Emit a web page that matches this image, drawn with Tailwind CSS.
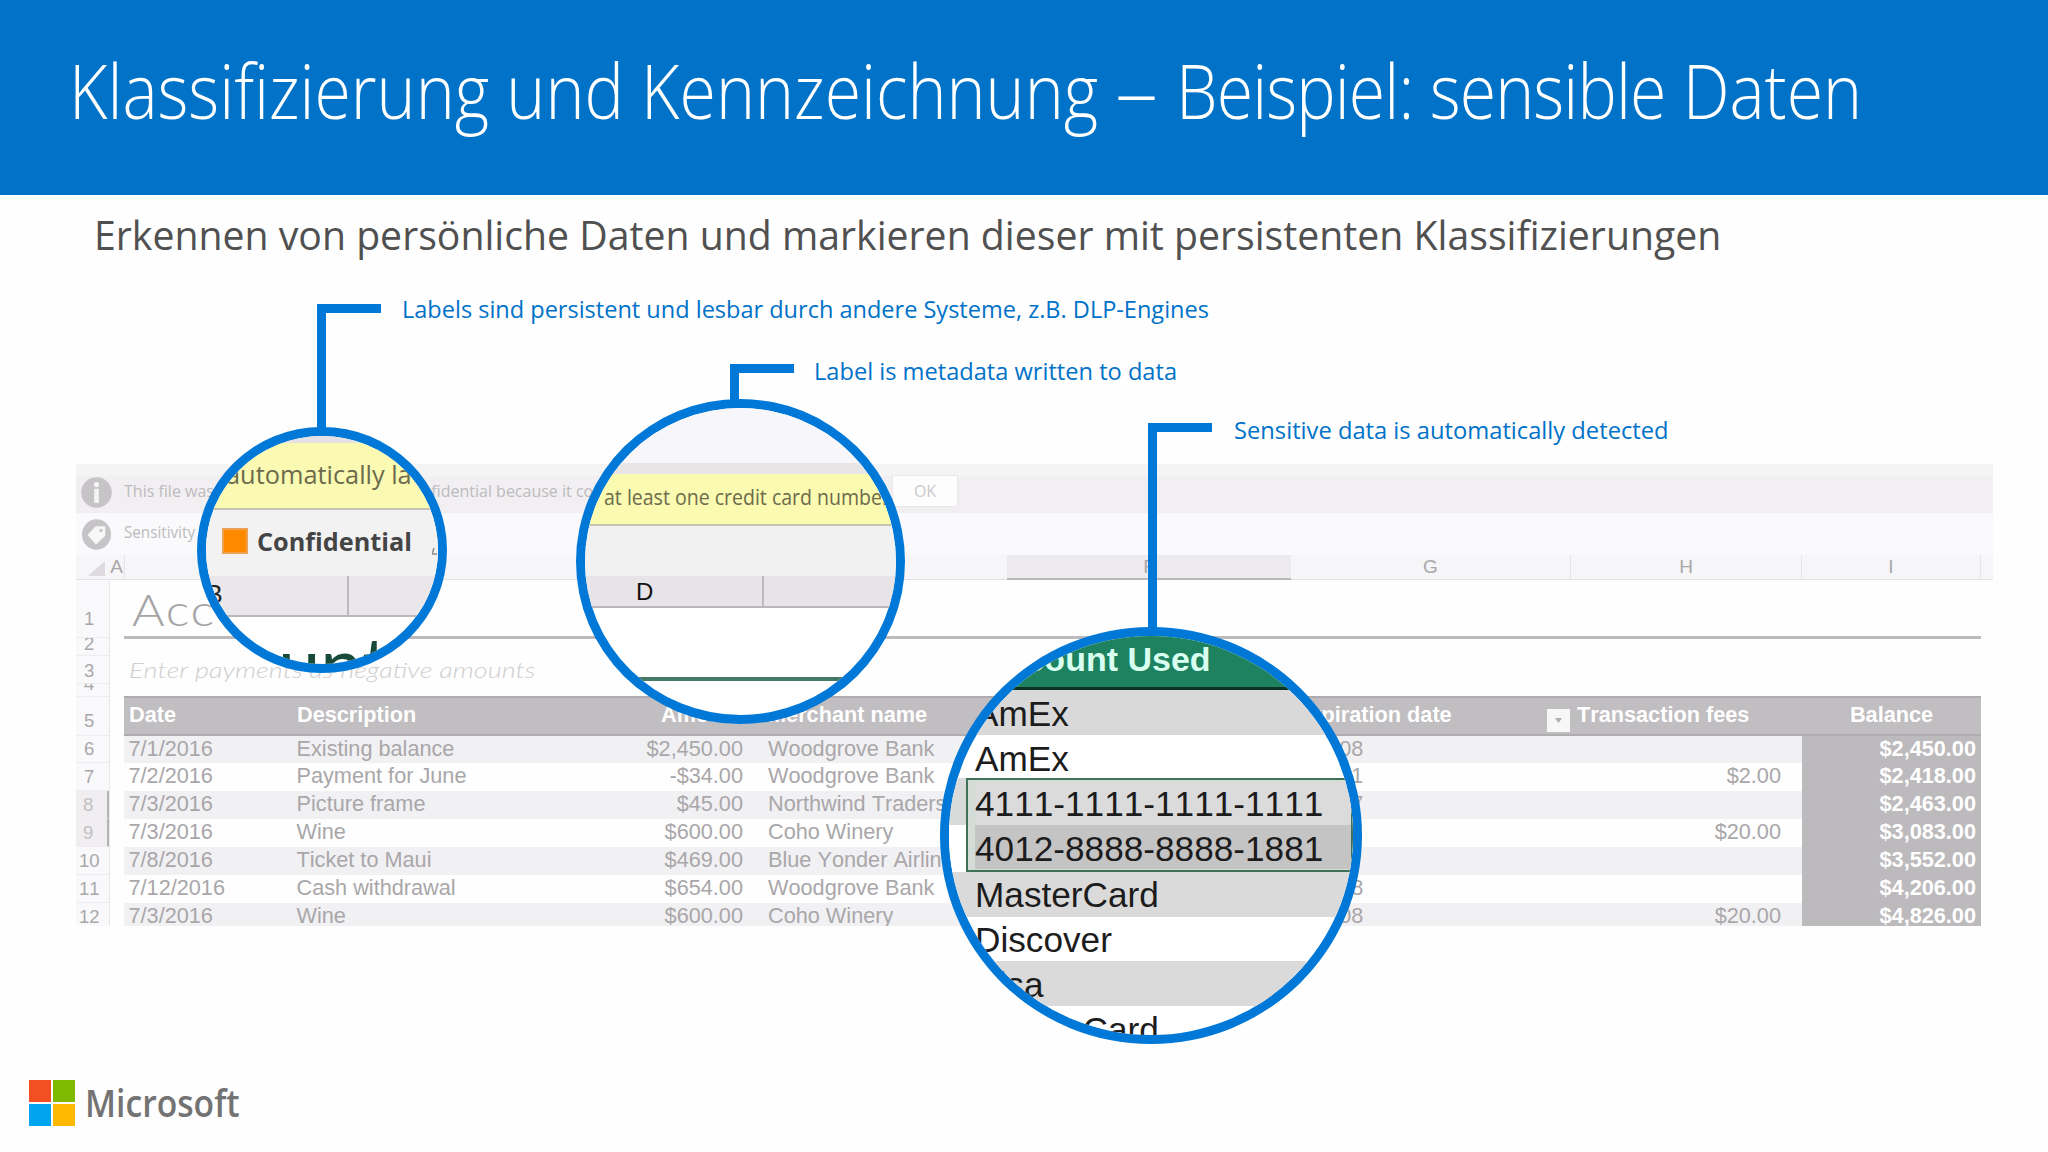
<!DOCTYPE html>
<html lang="de">

<head>
    <meta charset="UTF-8">
    <meta name="viewport" content="width=device-width, initial-scale=1.0">
    <title>Klassifizierung und Kennzeichnung</title>
    <script src="https://cdn.jsdelivr.net/npm/@tailwindcss/browser@4"></script>
</head>

<body class="bg-[#fefefe] font-['Open_Sans',sans-serif]">
    <main class="relative w-[2048px] h-[1152px] overflow-hidden whitespace-nowrap">
        <header class="h-[195px] bg-[#0072c7] pl-[69px] pt-[31px]">
            <h1 class="inline-block origin-left scale-x-[0.871] text-[76px] leading-[118px] font-light text-white">Klassifizierung und Kennzeichnung <span class="inline-block origin-left scale-x-[1.3] mr-[12px]">–</span> <span class="tracking-[-1px]">Beispiel: sensible</span> Daten</h1>
        </header>
        <div class="h-[269px] pl-[93.5px] pt-[14px]">
            <p class="inline-block origin-left scale-x-[0.968] text-[40.5px] leading-[52px] text-[#505050]">Erkennen von persönliche Daten und markieren dieser mit persistenten Klassifizierungen</p>
        </div>

        <!-- faded spreadsheet -->
        <section class="ml-[76px] w-[1917px] h-[462px] overflow-hidden font-['Liberation_Sans',sans-serif] [font-kerning:none]">
            <div class="h-[49px] bg-[#f1eff1] border-t-[12px] border-[#f5f4f5] flex items-center pl-[5px] font-['Open_Sans',sans-serif] text-[16px] text-[#bdbbbd]">
                <svg class="-mt-3 w-[31px] h-[31px] shrink-0 relative top-[4px]" viewBox="0 0 31 31">
                    <circle cx="15.5" cy="15.5" r="15.3" fill="#c6c4c6" />
                    <circle cx="15.5" cy="7.6" r="2.6" fill="#f6f5f6" />
                    <rect x="13.2" y="11.8" width="4.6" height="14" fill="#f6f5f6" />
                </svg>
                <span class="w-[780px] pl-[12px] -mt-[7px]">This file was automatically labeled as Confidential because it contains</span>
                <span class="-mt-[8px] w-[66px] h-[32px] shrink-0 bg-[#fdfdfd] border border-[#e9e7e9] flex items-center justify-center text-[#cbc9cb]">OK</span>
            </div>
            <div class="h-[42px] bg-[#faf9fb] flex items-center pl-[6px] font-['Open_Sans',sans-serif] text-[16px] text-[#bdbbbd]">
                <svg class="w-[29px] h-[31px] shrink-0" viewBox="0 0 29 31">
                    <ellipse cx="14.5" cy="15.5" rx="14.5" ry="15.3" fill="#c6c4c6" />
                    <path d="M6.5 16 14 8h8.5v8.5L14 24.5Z" fill="#f8f7f8" stroke="#f8f7f8" stroke-width="1.5" stroke-linejoin="round" />
                    <circle cx="19" cy="11.5" r="1.7" fill="#c6c4c6" />
                </svg>
                <span class="inline-block origin-left scale-x-95 ml-[13px] -mt-[4px]">Sensitivity</span>
            </div>

            <!-- column letters -->
            <div class="h-[25px] bg-[#f6f5f7] border-b border-[#e3e1e3] flex text-center text-[19px] leading-[24px] text-[#a8a6a8]">
                <div class="w-[33px] flex items-end justify-end pr-1 pb-[3px]"><svg class="w-[17px] h-[15px]" viewBox="0 0 17 15"><path d="M17 0v15H0z" fill="#dddbdd" /></svg></div>
                <div class="w-[16px] border-r border-[#e6e4e6]">A</div>
                <div class="w-[882px]"></div>
                <div class="w-[284px] h-[25px] bg-[#edebed] border-b-2 border-[#bab8ba]">F</div>
                <div class="w-[280px] border-r border-[#e6e4e6]">G</div>
                <div class="w-[231px] border-r border-[#e6e4e6]">H</div>
                <div class="w-[179px] border-r border-[#e6e4e6]">I</div>
            </div>

            <div class="flex">
                <div id="row_numbers" class="w-[33.5px] bg-[#f9f8fa] border-r border-[#e8e6e8] text-center text-[18.5px] text-[#aaa8aa]"></div>
                <div class="ml-[14.5px] w-[1857px] text-[21.7px] text-[#a9a7a9]">
                    <div class="h-[59px] border-b-[3px] border-[#bcbabc] pl-[8px] font-['Lato',sans-serif] text-[#a6a4a6]"><span class="inline-block origin-left scale-x-[1.16] text-[43px] leading-[60px] font-light tracking-[1px]">Acc</span></div>
                    <div class="h-[57px] pl-[5px] pt-[15px] font-['Lato',sans-serif] text-[#cfcdcf]"><span class="inline-block origin-left scale-x-[1.228] text-[22px] leading-[30px] font-light italic">Enter payments as negative amounts</span></div>
                    <div class="h-[39.5px] bg-[#c0bec0] border-y-2 border-[#aeacae] flex font-bold text-[21.7px] leading-[34px] text-white">
                        <div class="w-[168px] pl-[5px]">Date</div>
                        <div class="w-[290px] pl-[5px]">Description</div>
                        <div class="w-[161px] text-right">Amount</div>
                        <div class="w-[264px] pl-[25px]">Merchant name</div>
                        <div class="w-[284px]"></div>
                        <div class="w-[256px] pl-[4px]">Expiration date</div>
                        <div class="flex w-[26px] items-end"><div class="w-[23px] h-[23px] mb-[2px] bg-[#f8f7f8] flex items-center justify-center"><svg class="w-[7px] h-[5px]" viewBox="0 0 7 5"><path d="M0 0h7L3.5 5z" fill="#b0aeb0" /></svg></div></div>
                        <div class="w-[229px] pl-[4px]">Transaction fees</div>
                        <div class="w-[179px] text-center">Balance</div>
                    </div>
                    <div id="payments"></div>
                </div>
            </div>
        </section>

        <!-- Microsoft logo -->
        <footer class="flex items-center pl-[29px] pt-[154px]">
            <div class="grid grid-cols-2 gap-[2.5px] w-[45.5px] h-[46px]">
                <i class="bg-[#f25022]"></i><i class="bg-[#7fba00]"></i>
                <i class="bg-[#00a4ef]"></i><i class="bg-[#ffb900]"></i>
            </div>
            <span class="inline-block origin-left scale-x-[0.91] ml-[10.5px] text-[37px] leading-[46px] font-semibold text-[#737373]">Microsoft</span>
        </footer>

        <!-- callout 1 -->
        <div class="absolute left-[317px] top-[304px] w-[64px] h-[130px] border-l-[9.5px] border-t-[9.5px] border-[#0078d7]"></div>
        <p class="absolute origin-left scale-x-[0.98] left-[402px] top-[292px] text-[24px] leading-[34px] text-[#0072c9]">Labels sind persistent und lesbar durch andere Systeme, z.B. DLP-Engines</p>
        <div class="absolute left-[197px] top-[427px] w-[250px] h-[246px] rounded-[50%] border-[9px] border-[#0078d7] bg-white overflow-hidden">
            <div class="h-[7px] bg-[#e4e2e4]"></div>
            <div class="h-[67px] bg-[#fafab2] border-b-2 border-[#c4c3b4] pl-[20px] text-[26px] leading-[63px] text-[#6c6b4c]"><span class="inline-block origin-left scale-x-[0.975]">automatically la</span></div>
            <div class="h-[66px] bg-[#f3f2f3] flex items-center pl-[16px] pb-[5px]">
                <i class="w-[26px] h-[26px] shrink-0 bg-[#ff8a00] border-2 border-[#eca050]"></i>
                <span class="inline-block origin-left scale-x-[1.01] ml-[9px] text-[25px] leading-[30px] font-bold text-[#444]">Confidential</span>
                <svg class="w-[6px] h-[8px] shrink-0 ml-[22px] mt-[20px]" viewBox="0 0 6 8"><path d="M0 7 2 1M0 7h5" fill="none" stroke="#8a888a" stroke-width="1.5" /></svg>
            </div>
            <div class="h-[41px] bg-[#e9e7e9] border-b-2 border-[#b9b7b9] flex font-['Liberation_Sans',sans-serif] text-[25px] leading-[37px] text-[#222]">
                <div class="w-[143px] border-r-2 border-[#bcbabc]">B</div>
            </div>
            <div class="pl-[72px] mt-[11px] font-['Lato',sans-serif] text-[76px] leading-[70px] text-[#174a38]">unt</div>
        </div>

        <!-- callout 2 -->
        <div class="absolute left-[730px] top-[364px] w-[64px] h-[42px] border-l-[9.5px] border-t-[9.5px] border-[#0078d7]"></div>
        <p class="absolute origin-left scale-x-[0.984] left-[814px] top-[354px] text-[24px] leading-[34px] text-[#0072c9]">Label is metadata written to data</p>
        <div class="absolute left-[576px] top-[399px] w-[329px] h-[325px] rounded-[50%] border-[9px] border-[#0078d7] bg-white overflow-hidden">
            <div class="h-[66px] bg-[#f7f6fa] border-b-[11px] border-[#e8e5e7]"></div>
            <div class="h-[52px] bg-[#fafab0] border-b-2 border-[#c4c3b4] pl-[19px] text-[21.5px] leading-[46px] text-[#6c6b4c]"><span class="inline-block origin-left scale-x-[0.908]">at least one credit card number</span></div>
            <div class="h-[50px] bg-[#f1f1f2]"></div>
            <div class="h-[32px] bg-[#e6e4e6] border-b-2 border-[#b9b7b9] flex font-['Liberation_Sans',sans-serif] text-[24px] leading-[31px] text-[#111]">
                <div class="w-[179px] border-r-2 border-[#bcbabc] pl-[51px]">D</div>
            </div>
            <div class="h-[73px] border-b-[4px] border-[#467a67]"></div>
        </div>

        <!-- callout 3 -->
        <div class="absolute left-[1148px] top-[423px] w-[64px] h-[210px] border-l-[9.5px] border-t-[9.5px] border-[#0078d7]"></div>
        <p class="absolute origin-left scale-x-[0.988] left-[1234px] top-[413px] text-[24px] leading-[34px] text-[#0072c9]">Sensitive data is automatically detected</p>
        <div class="absolute left-[940px] top-[627px] w-[422px] h-[417px] rounded-[50%] border-[9px] border-[#0078d7] bg-white overflow-hidden font-['Liberation_Sans',sans-serif] [font-kerning:none] text-[35.2px] text-[#1c1c1c]">
            <div class="h-[54px] bg-[#1e8260] border-b-[3px] border-[#0c3324] pl-[33px] font-bold text-[34px] leading-[47px] text-[#d9fff0]">Account Used</div>
            <div class="h-[45px] bg-[#d9d9d9] pl-[26px] leading-[48px]">AmEx</div>
            <div class="h-[43px] pl-[26px] leading-[48px]">AmEx</div>
            <div class="h-[94px] pl-[17px] bg-linear-to-b from-[#d9dada] from-50% to-white to-50%">
                <div class="h-full border-2 border-[#3f7058] bg-[#d3dcd7] pl-[7px] py-[2px]">
                    <div class="h-[43px] leading-[44px] bg-[#dbdbdb]">4111-1111-1111-1111</div>
                    <div class="h-[44px] leading-[48px] bg-[#c5c4c5]">4012-8888-8888-1881</div>
                </div>
            </div>
            <div class="h-[45px] bg-[#dadada] pl-[26px] leading-[46px]">MasterCard</div>
            <div class="h-[44px] pl-[26px] leading-[46px]">Discover</div>
            <div class="h-[45px] bg-[#dadada] pl-[26px] leading-[48px]">Visa</div>
            <div class="h-[45px] pl-[26px] leading-[47px]">MasterCard</div>
        </div>
    </main>
    <script>
        // height and bottom padding of each numbered row
        const rowNumbers = [[58, 7], [18, 0], [28, 1], [13, 1], [38.5, 3], [27.5, 2], [27.5, 2], [28.5, 2], [28, 2], [28, 2], [27.5, 2], [28, 2]]
        document.getElementById('row_numbers').innerHTML = rowNumbers.map(([height, pad], i) => {
            const selected = i === 7 || i === 8
            return `<div class="flex items-end justify-center overflow-hidden border-b border-[#eeecee] pr-[6px] leading-[22px] ${selected ? 'bg-[#f0eef0] border-r-2 border-r-[#b5b3b5] text-[#c2c0c2]' : ''}" style="height:${height}px;padding-bottom:${pad}px">${i + 1}</div>`
        }).join('')

        const payments = [
            ['7/1/2016', 'Existing balance', '$2,450.00', 'Woodgrove Bank', '8/2008', '', '$2,450.00'],
            ['7/2/2016', 'Payment for June', '-$34.00', 'Woodgrove Bank', '5/2011', '$2.00', '$2,418.00'],
            ['7/3/2016', 'Picture frame', '$45.00', 'Northwind Traders', '3/2017', '', '$2,463.00'],
            ['7/3/2016', 'Wine', '$600.00', 'Coho Winery', '', '$20.00', '$3,083.00'],
            ['7/8/2016', 'Ticket to Maui', '$469.00', 'Blue Yonder Airlin', '', '', '$3,552.00'],
            ['7/12/2016', 'Cash withdrawal', '$654.00', 'Woodgrove Bank', '8/2008', '', '$4,206.00'],
            ['7/3/2016', 'Wine', '$600.00', 'Coho Winery', '8/2008', '$20.00', '$4,826.00'],
        ]
        document.getElementById('payments').innerHTML = payments.map((p, i) => `
            <div class="flex h-[27.85px] leading-[26px] ${i % 2 ? '' : 'bg-[#f1f0f3]'}">
                <div class="w-[168px] pl-[4.5px]">${p[0]}</div>
                <div class="w-[290px] pl-[4.5px]">${p[1]}</div>
                <div class="w-[161px] text-right">${p[2]}</div>
                <div class="w-[548px] pl-[25px]">${p[3]}</div>
                <div class="w-[280px] pl-[6px]">${p[4]}</div>
                <div class="w-[231px] pr-[21px] text-right">${p[5]}</div>
                <div class="w-[179px] pr-[5px] text-right font-bold text-white bg-[#bcbabc]">${p[6]}</div>
            </div>`).join('')
    </script>
</body>

</html>
